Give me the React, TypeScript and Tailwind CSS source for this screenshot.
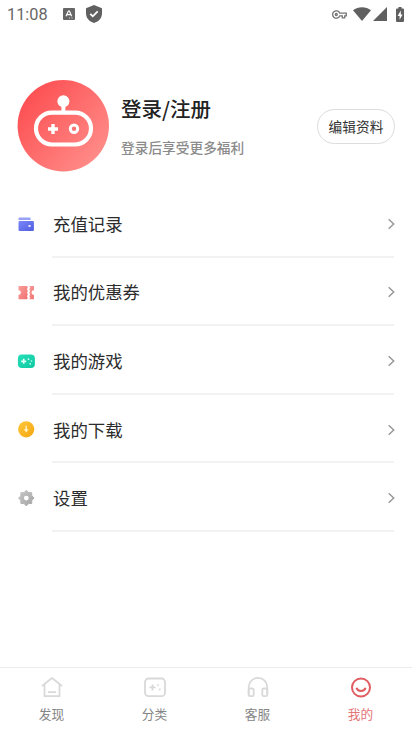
import type { ReactNode } from "react";

function StatusBar() {
  return (
    <header className="flex h-7 shrink-0 items-center pl-[7px] pr-[7px] text-[#666]">
      <span className="w-[56px] pt-0.5 font-[Roboto,sans-serif] text-[16.3px] leading-[26px]">11:08</span>
      <svg className="h-3 w-3" viewBox="0 0 12 12">
        <rect width="12" height="12" rx="1" fill="#666" />
        <path d="M3 8.2 5.4 3h1l2.2 5.2M4.2 6.7h3.4" fill="none" stroke="#fff" strokeWidth="1.2" />
        <path d="M6 10h1M8.5 10h1" stroke="#ddd" />
      </svg>
      <svg className="ml-[11px] h-[18px] w-4" viewBox="0 0 16 18">
        <path d="m8 0 8 3.3V8c0 4.9-3 8.5-8 10-5-1.5-8-5.1-8-10V3.3Z" fill="#606060" />
        <path d="m4.3 8.8 2.5 2.5 4.9-5" fill="none" stroke="#fff" strokeWidth="1.8" />
      </svg>
      <div className="ml-auto flex items-center">
        <svg className="h-[9px] w-[15px]" viewBox="0 0 15 9" fill="none" stroke="#747474" strokeWidth="1.3">
          <path d="M7.8 3.2A3.7 3.7 0 1 0 7.8 5.8H10.3V7.9H12.7V5.8H14.3V3.2Z" />
          <circle cx="4.3" cy="4.5" r="1" />
        </svg>
        <svg className="ml-1.5 h-[14px] w-[18px]" viewBox="0 0 18 14">
          <path d="M0 3.2C5-.9 13-.9 18 3.2L9 14Z" fill="#606060" />
        </svg>
        <svg className="ml-[2px] h-[14px] w-[14px]" viewBox="0 0 14 14">
          <path d="M14 0v14H0Z" fill="#606060" />
        </svg>
        <svg className="ml-[9px] mr-px h-[15px] w-[8px]" viewBox="0 0 8 15">
          <path d="M2.400 0h3.200v1.500H7A1 1 0 0 1 8 2.500V14a1 1 0 0 1-1 1H1a1 1 0 0 1-1-1V2.500a1 1 0 0 1 1-1h1.400Z" fill="#606060" />
          <path d="M4.800 3.500 1.600 9h2v3.700L6.600 7.400H4.800Z" fill="#fff" />
        </svg>
      </div>
    </header>
  );
}

function Avatar() {
  return (
    <svg className="h-[92px] w-[92px] shrink-0" viewBox="0 0 92 92">
      <defs>
        <linearGradient id="avatar" x1=".1" y1=".2" x2=".9" y2=".9">
          <stop stopColor="#fd5154" />
          <stop offset="1" stopColor="#ff8e8a" />
        </linearGradient>
      </defs>
      <circle cx="46.3" cy="45.8" r="45.7" fill="url(#avatar)" />
      <circle cx="46.4" cy="21.300" r="6" fill="#fff" />
      <path d="M46.400 25v9" stroke="#fff" strokeWidth="4" />
      <rect x="19" y="32.700" width="55" height="31.800" rx="15.900" fill="none" stroke="#fff" strokeWidth="4.200" />
      <path d="M31 49h10M36 44v10" stroke="#fff" strokeWidth="3.400" />
      <circle cx="57" cy="48.700" r="3.700" fill="none" stroke="#fff" strokeWidth="3" />
    </svg>
  );
}

const items: { label: string; icon: ReactNode }[] = [
  {
    label: "充值记录",
    icon: (
      <>
        <linearGradient id="wallet" x1="0" y1="0" x2="1" y2="1">
          <stop stopColor="#7c88f8" />
          <stop offset="1" stopColor="#4e5de0" />
        </linearGradient>
        <path d="M2.500 1.500h10.300a.8.800 0 0 1 .8.800v1.600H1.500V2.500a1 1 0 0 1 1-1Z" fill="#98a2f5" />
        <rect x="1.500" y="4.900" width="15.400" height="10.200" rx="1" fill="url(#wallet)" />
        <rect x="11.200" y="8.900" width="2.600" height="2.200" rx="1" fill="#e7eaff" />
      </>
    ),
  },
  {
    label: "我的优惠券",
    icon: (
      <>
        <linearGradient id="coupon" x1="0" y1="0" x2="1" y2="1">
          <stop stopColor="#faa09c" />
          <stop offset="1" stopColor="#f06f70" />
        </linearGradient>
        <path d="M1.500 1.900H10l.8 1.500-.8 1.700.8 1.800-.8 1.800.8 1.800-.8 1.700.8 1.600-.8 1.500H1.500v-4.300a2.400 2.400 0 0 0 0-4.800Z" fill="url(#coupon)" />
        <path d="M12.300 1.900h4.600v4.300a2.400 2.400 0 0 0 0 4.800v4.300h-4.600l.8-1.500-.8-1.600.8-1.700-.8-1.800.8-1.800-.8-1.800.8-1.700Z" fill="url(#coupon)" />
      </>
    ),
  },
  {
    label: "我的游戏",
    icon: (
      <>
        <linearGradient id="games" x1="0" y1="0" x2="1" y2="1">
          <stop stopColor="#25dfb8" />
          <stop offset="1" stopColor="#10c9a2" />
        </linearGradient>
        <rect x=".9" y="1.600" width="17" height="13.500" rx="4" fill="url(#games)" />
        <path d="M4.200 8.300h5M6.700 5.800v5" stroke="#dffff8" strokeWidth="1.700" />
        <circle cx="11.500" cy="6.200" r=".9" fill="#c9fff0" />
        <circle cx="14.500" cy="8" r=".8" fill="#c9fff0" />
        <circle cx="13.200" cy="10.800" r=".9" fill="#c9fff0" />
      </>
    ),
  },
  {
    label: "我的下载",
    icon: (
      <>
        <linearGradient id="download" x1="0" y1="0" x2="1" y2="1">
          <stop stopColor="#ffc83d" />
          <stop offset="1" stopColor="#f5a50f" />
        </linearGradient>
        <circle cx="9.200" cy="8.300" r="8.100" fill="url(#download)" />
        <path d="M8.600 4.800h1.200l.2 3.500h1.600l-2.400 3.300-2.400-3.300h1.600Z" fill="#fff2c5" />
      </>
    ),
  },
  {
    label: "设置",
    icon: (
      <>
        <linearGradient id="gear" x1="0" y1="0" x2="1" y2="1">
          <stop stopColor="#c8c8c8" />
          <stop offset="1" stopColor="#a3a3a3" />
        </linearGradient>
        <path
          d="M9.300.3 11.500 2.600 14.700 2.700 14.800 5.900 17.100 8.100 14.800 10.300 14.700 13.500 11.500 13.600 9.300 15.900 7.100 13.600 3.900 13.500 3.800 10.300 1.500 8.100 3.800 5.900 3.900 2.700 7.100 2.600Z"
          fill="url(#gear)"
          stroke="url(#gear)"
          strokeLinejoin="round"
        />
        <circle cx="9.300" cy="8.100" r="2.400" fill="#fff" />
      </>
    ),
  },
];

const tabs: { label: string; active?: boolean; icon: ReactNode }[] = [
  {
    label: "发现",
    icon: <path d="M1 9 11 1l10 8M3.500 7.500V19.200h15V7.500M7 15.200h8" />,
  },
  {
    label: "分类",
    icon: (
      <>
        <rect x="1" y="1.500" width="20" height="17.700" rx="3.500" />
        <path d="M5.500 10.400h6M8.500 7.400v6" />
        <path d="M13.300 8.200h1.500M15 12.500h1.500" />
      </>
    ),
  },
  {
    label: "客服",
    icon: (
      <>
        <path d="M1.700 17.500V10.200a9.300 9.300 0 0 1 18.600 0v7.300" />
        <rect x="1.700" y="11.500" width="5" height="7.700" rx="1.500" />
        <rect x="15.300" y="11.500" width="5" height="7.700" rx="1.500" />
      </>
    ),
  },
  {
    label: "我的",
    active: true,
    icon: (
      <>
        <circle cx="11" cy="10.500" r="9" />
        <path d="M6.500 10.700c1.100 4.300 7.900 4.300 9 0" />
      </>
    ),
  },
];

export default function App() {
  return (
    <div className="flex h-[732px] w-full flex-col overflow-hidden bg-white font-['Noto_Sans_CJK_SC',sans-serif]">
      <StatusBar />
      <section className="mt-[52px] flex h-[92px] shrink-0 items-center pl-[17px] pr-[17px]">
        <Avatar />
        <div className="ml-3 flex flex-col pb-[3px]">
          <h1 className="text-[20.5px] font-medium leading-[30px] text-[#222]">登录/注册</h1>
          <p className="mt-[14px] text-[13.7px] font-medium leading-5 text-[#8b8b8b]">登录后享受更多福利</p>
        </div>
        <button className="ml-auto h-[35px] w-[78px] rounded-full border border-[#dcdcdc] pt-px text-[13.7px] leading-none text-[#333]">
          编辑资料
        </button>
      </section>
      <main className="mt-[17px] flex-1">
        {items.map((item) => (
          <div key={item.label} className="flex h-[68.6px] pl-[17px] pr-[18px]">
            <svg className="mt-[26.5px] h-[18px] w-[18px] shrink-0" viewBox="0 0 18 18">
              {item.icon}
            </svg>
            <div className="ml-[17px] flex flex-1 items-center justify-between border-b-2 border-[#f2f2f2] pl-px pt-[3px]">
              <span className="text-[17.4px] leading-6 text-[#2c2c2c]">{item.label}</span>
              <svg className="-mr-px h-3 w-[7px]" viewBox="0 0 7 12" fill="none" stroke="#999" strokeWidth="1.5">
                <path d="m.7 1.200 5 4.800-5 4.800" />
              </svg>
            </div>
          </div>
        ))}
      </main>
      <nav className="grid h-[65px] shrink-0 grid-cols-4 border-t border-[#ececec]">
        {tabs.map((tab) => (
          <div
            key={tab.label}
            className={`flex flex-col items-center pt-[9px] ${tab.active ? "text-[#e37679]" : "text-[#858585]"}`}
          >
            <svg
              className={`h-[21px] w-[22px] ${tab.active ? "stroke-[#e05c60]" : "stroke-[#d9d9d9]"}`}
              viewBox="0 0 22 21"
              fill="none"
              strokeWidth={tab.active ? 2 : 1.8}
              strokeLinejoin="round"
            >
              {tab.icon}
            </svg>
            <span className="mt-[6px] text-[12.7px] leading-5">{tab.label}</span>
          </div>
        ))}
      </nav>
    </div>
  );
}
